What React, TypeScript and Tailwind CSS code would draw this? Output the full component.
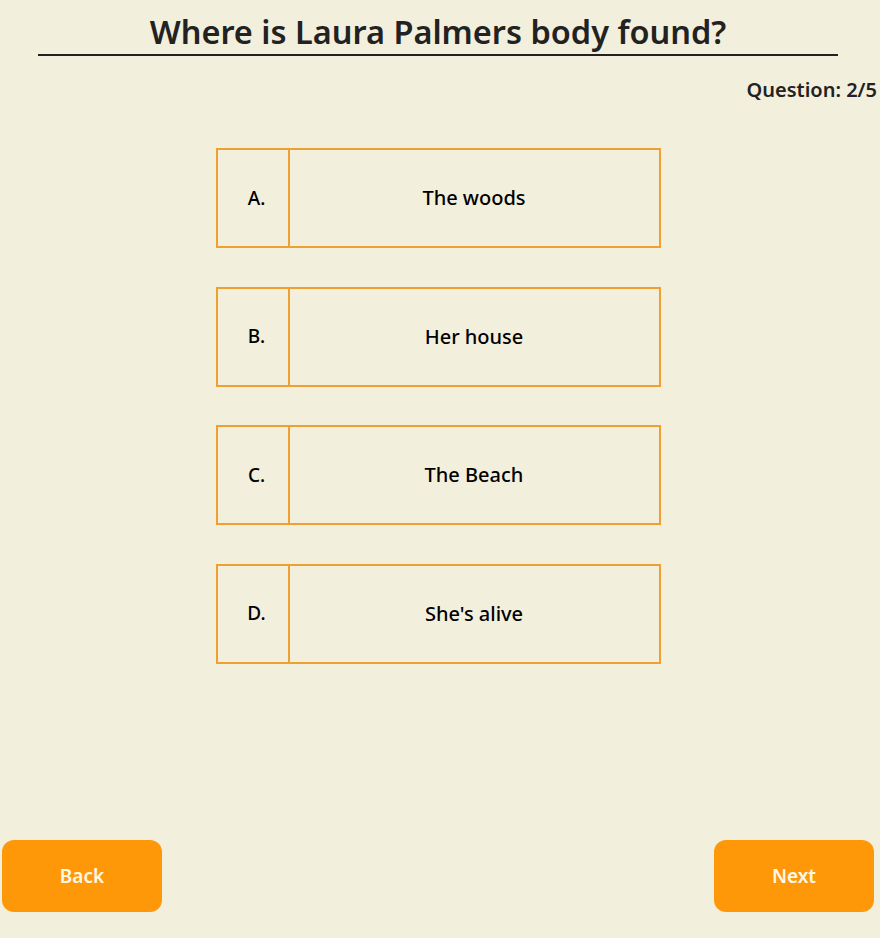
const OPTIONS = [
  { letter: 'A.', text: 'The woods' },
  { letter: 'B.', text: 'Her house' },
  { letter: 'C.', text: 'The Beach' },
  { letter: 'D.', text: "She's alive" },
]

export default function App() {
  return (
    <div
      className="flex min-h-[938px] w-[880px] flex-col bg-[#f3efdd] text-[#222]"
      style={{ fontFamily: '"Noto Sans", "Open Sans", sans-serif' }}
    >
      <div className="mx-[38px] w-[800px] border-b-2 border-[#222] pt-[10px] text-center">
        <h1 className="text-[32.5px] font-semibold leading-[44px]">Where is Laura Palmers body found?</h1>
      </div>
      <div className="mt-[20px] pr-[3px] text-right text-[20px] font-semibold leading-[27px]">Question: 2/5</div>

      <div className="mt-[45px] flex flex-col items-center gap-[38.5px] pr-[4px]">
        {OPTIONS.map((o) => (
          <div key={o.letter} className="flex h-[100px] w-[445px] border-2 border-[#f0a030]">
            <div className="flex w-[72px] items-center justify-center border-r-2 border-[#f0a030] pl-[8px] text-[19px] font-medium text-black">
              {o.letter}
            </div>
            <div className="flex flex-1 items-center justify-center text-[20px] font-medium text-black">{o.text}</div>
          </div>
        ))}
      </div>

      <div className="mt-auto mb-[26px] flex justify-between pl-[2px] pr-[6px]">
        <button className="h-[72px] w-[160px] rounded-[12px] bg-[#ff9808] text-[19px] font-semibold text-[#fff8e8]">Back</button>
        <button className="h-[72px] w-[160px] rounded-[12px] bg-[#ff9808] text-[19px] font-semibold text-[#fff8e8]">Next</button>
      </div>
    </div>
  )
}
